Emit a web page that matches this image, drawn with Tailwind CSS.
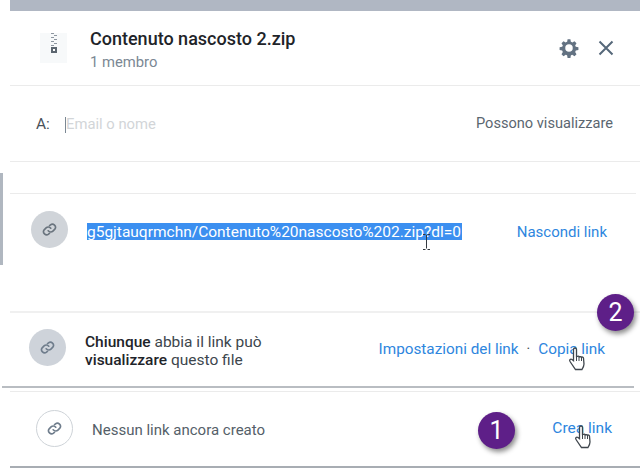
<!DOCTYPE html>
<html><head><meta charset="utf-8"><script src="https://cdn.jsdelivr.net/npm/@tailwindcss/browser@4"></script></head>
<body class="m-0 bg-white">
<div class="relative w-[640px] h-[468px] overflow-hidden bg-white font-['Roboto',sans-serif] text-[14px] text-[#3d464d]">
  <div class="ml-[10px] h-[11px] bg-[#b0b7c3]"></div>

  <div class="ml-[10px] h-[75px] border-b border-[#ebebeb] flex items-center pl-[30px] pr-[26px]">
    <div class="w-[27px] h-[30px] bg-[#f7f9fa] flex items-start justify-center mr-[23px]">
      <svg width="6" height="20" viewBox="0 0 6 20"><path d="M0 .500h3M3 2.500h3M0 4.500h3M3 6.500h3M0 8.500h3M3 10.500h3M0 12.500h3" stroke="#8d96a0" stroke-width="1"/><rect x="0" y="14" width="6" height="6" fill="#5c6670"/><rect x="2" y="16" width="2" height="2" fill="#fff"/></svg>
    </div>
    <div class="flex-1 mt-[4px]">
      <div class="text-[18px] leading-[24px] font-medium text-[#1e2429]">Contenuto nascosto 2.zip</div>
      <div class="text-[14.800px] leading-[22px] text-[#7b8894]">1 membro</div>
    </div>
    <svg class="mr-[19px]" width="20" height="20" viewBox="0 0 24 24" fill="#637282"><path fill-rule="evenodd" d="M13.700 1.500l.5 3.100c.6.2 1.200.5 1.700.8l2.700-1.600 2.400 2.400-1.600 2.700c.3.5.6 1.100.8 1.700l3.100.5v3.400l-3.100.5c-.2.6-.5 1.200-.8 1.700l1.600 2.700-2.400 2.400-2.700-1.600c-.5.3-1.100.6-1.700.8l-.5 3.100h-3.400l-.5-3.100c-.6-.2-1.200-.5-1.700-.8l-2.700 1.600-2.400-2.400 1.600-2.700c-.3-.5-.6-1.100-.8-1.700l-3.100-.5v-3.400l3.100-.5c.2-.6.5-1.200.8-1.700L3 6.200l2.400-2.400 2.700 1.600c.5-.3 1.100-.6 1.700-.8l.5-3.100zM12 7.500a4.500 4.500 0 100 9 4.500 4.500 0 000-9z"/></svg>
    <svg width="16" height="16" viewBox="0 0 16 16" stroke="#56687a" stroke-width="2" fill="none"><path d="M1.500 1.500l13 13M14.500 1.500l-13 13"/></svg>
  </div>

  <div class="ml-[10px] h-[76px] border-b border-[#ebebeb] flex items-center pl-[26px] pr-[27px]">
    <span class="text-[15.500px] text-[#4a525a] w-[29px] mt-[2px]">A:</span>
    <span class="w-px h-[16px] bg-[#7b8894] mt-[2px]"></span>
    <span class="flex-1 text-[14.800px] text-[#d2d5d8] mt-[2px]">Email o nome</span>
    <span class="text-[14.600px] text-[#5b6670]">Possono visualizzare</span>
  </div>

  <div class="ml-[10px] mr-[4px] h-[32px] border-b border-[#ebebeb]"></div>

  <div class="ml-[10px] h-[119px] border-b-2 border-[#f0f0f0] flex items-start pt-[17px] pl-[21px] pr-[33px]">
    <div class="w-[37px] h-[37px] rounded-full bg-[#d0d4d9] flex items-center justify-center mr-[19px]">
      <svg width="15" height="15" viewBox="0 0 24 24" fill="none" stroke="#6a747e" stroke-width="2.600" stroke-linecap="round"><path d="M10 14a5 5 0 007.500.500l3-3a5 5 0 00-7-7l-1.500 1.500"/><path d="M14 10a5 5 0 00-7.500-.500l-3 3a5 5 0 007 7l1.500-1.500"/></svg>
    </div>
    <div class="flex-1 mt-[12px]"><span class="block w-[375px] h-[17px] leading-[19px] bg-[#3b8ff0] text-white text-[15.500px] whitespace-nowrap overflow-hidden">g5gjtauqrmchn/Contenuto%20nascosto%202.zip?dl=0</span></div>
    <span class="mt-[10px] text-[15px] text-[#2e86de] whitespace-nowrap">Nascondi link</span>
  </div>

  <div class="ml-[2px] mr-[6px] h-[75px] border-b-2 border-[#b9bdc2] flex items-center pl-[27px] pr-[29px]">
    <div class="w-[37px] h-[37px] rounded-full bg-[#ced3da] flex items-center justify-center mr-[19px] -mt-[4px]">
      <svg width="15" height="15" viewBox="0 0 24 24" fill="none" stroke="#6f7d8c" stroke-width="2.600" stroke-linecap="round"><path d="M10 14a5 5 0 007.500.500l3-3a5 5 0 00-7-7l-1.500 1.500"/><path d="M14 10a5 5 0 00-7.500-.500l-3 3a5 5 0 007 7l1.500-1.500"/></svg>
    </div>
    <div class="flex-1 text-[15.500px] leading-[18px] text-[#3d464d] mt-[2px]"><b class="font-medium text-[#1e2429]">Chiunque</b> abbia il link può<br><b class="font-medium text-[#1e2429]">visualizzare</b> questo file</div>
    <span class="text-[15.300px] text-[#2e86de] whitespace-nowrap">Impostazioni del link</span>
    <span class="mx-[8px] text-[#3d464d]">·</span>
    <span class="text-[15.300px] text-[#2e86de] whitespace-nowrap">Copia link</span>
  </div>

  <div class="ml-[10px] mt-[3px] h-[77px] border-t border-[#ebebeb] border-b-2 border-b-[#a8adb3] flex items-center pl-[26px] pr-[28px]">
    <div class="w-[37px] h-[37px] rounded-full border border-[#ced3d8] flex items-center justify-center mr-[19px] -mt-[2px]">
      <svg width="15" height="15" viewBox="0 0 24 24" fill="none" stroke="#6f7d8c" stroke-width="2.600" stroke-linecap="round"><path d="M10 14a5 5 0 007.500.500l3-3a5 5 0 00-7-7l-1.500 1.500"/><path d="M14 10a5 5 0 00-7.500-.500l-3 3a5 5 0 007 7l1.500-1.500"/></svg>
    </div>
    <span class="flex-1 text-[15px] text-[#555f69] mt-[2px]">Nessun link ancora creato</span>
    <span class="text-[15.500px] text-[#2e86de] whitespace-nowrap">Crea link</span>
  </div>

  <!-- overlays -->
  <div class="absolute left-0 top-[173px] w-[3px] h-[92px] bg-[#b0b7c0]"></div>
  <div class="absolute left-[597px] top-[294px] w-[37px] h-[37px] rounded-full bg-[#5e1f88] shadow-[2px_3px_5px_rgba(0,0,0,0.45)] text-white text-[25px] flex items-center justify-center">2</div>
  <div class="absolute left-[478px] top-[412px] w-[37px] h-[37px] rounded-full bg-[#5e1f88] shadow-[2px_3px_5px_rgba(0,0,0,0.45)] text-white text-[25px] flex items-center justify-center">1</div>

  <svg class="absolute left-[421px] top-[234px]" width="11" height="16" viewBox="0 0 11 16" fill="none" stroke="#33393f" stroke-width="1"><path d="M2 .500h2.500M6.500 .500H9M5.500 1v13.500M2 15.500h2.500M6.500 15.500H9"/></svg>

  <svg class="absolute left-[568px] top-[347px]" width="20" height="25" viewBox="0 0 20 25"><path d="M5.500 2.500a1.500 1.500 0 013 0v7l1-.2a1.400 1.400 0 011.800.6 1.400 1.400 0 012 .4 1.400 1.400 0 012.200.8l.5 6c0 2-.8 3.500-2 5.400H7.500L2 14.500c-1-1.500.5-3 2-2l1.500 1.200z" fill="#fff" stroke="#3f464d" stroke-width="1.300"/><path d="M8.500 9v5M11 10v4M13.500 10v4" stroke="#3f464d" stroke-width="1"/></svg>
  <svg class="absolute left-[574px] top-[425px]" width="20" height="25" viewBox="0 0 20 25"><path d="M5.500 2.500a1.500 1.500 0 013 0v7l1-.2a1.400 1.400 0 011.800.6 1.400 1.400 0 012 .4 1.400 1.400 0 012.200.8l.5 6c0 2-.8 3.500-2 5.400H7.500L2 14.500c-1-1.500.5-3 2-2l1.500 1.200z" fill="#fff" stroke="#3f464d" stroke-width="1.300"/><path d="M8.500 9v5M11 10v4M13.500 10v4" stroke="#3f464d" stroke-width="1"/></svg>
</div>
</body></html>
